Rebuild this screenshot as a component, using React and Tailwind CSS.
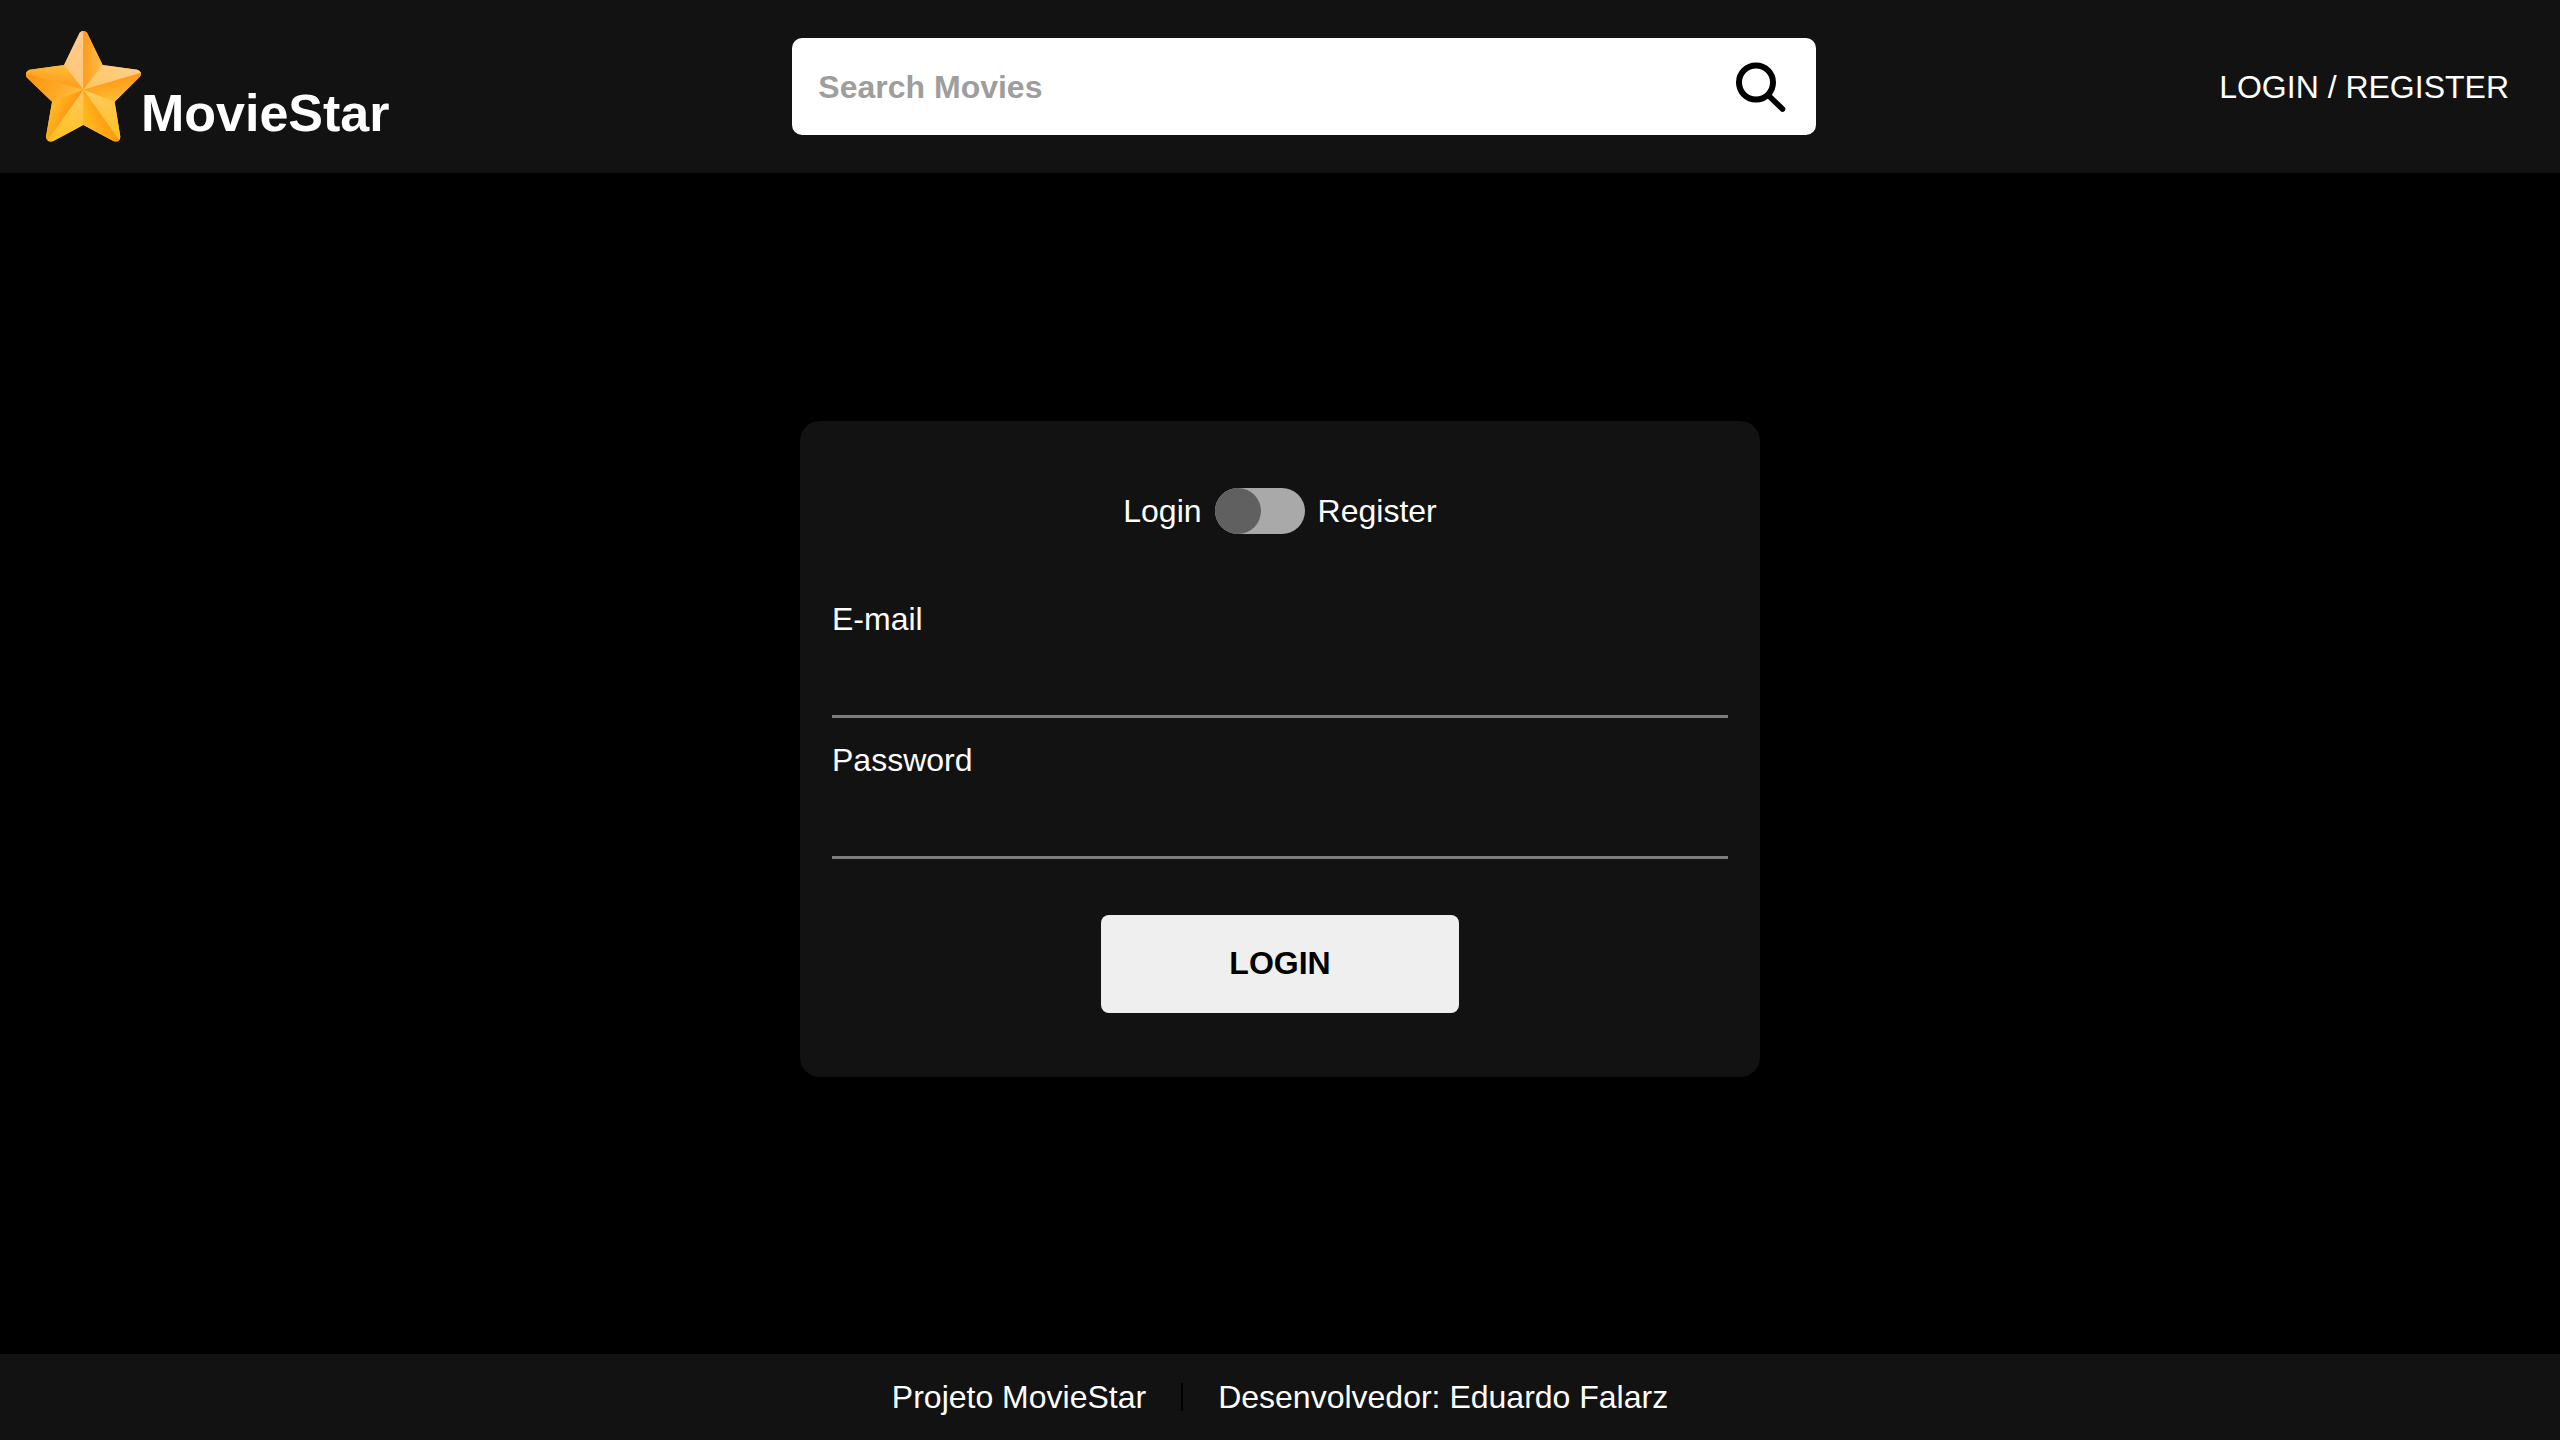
import { useState } from "react";

function StarLogo() {
  return (
    <svg viewBox="78 87 345 345" className="size-[115px] shrink-0" aria-hidden="true">
      <defs>
        <linearGradient id="topLeft" x1="0.6" y1="0" x2="0.4" y2="1">
          <stop offset="0" stopColor="#ffcb90" />
          <stop offset="1" stopColor="#ffc673" />
        </linearGradient>
        <linearGradient id="topRight" x1="0" y1="0.5" x2="1" y2="0.6">
          <stop offset="0" stopColor="#ff9b1d" />
          <stop offset="1" stopColor="#ffc04c" />
        </linearGradient>
        <linearGradient id="rightTop" x1="1" y1="0" x2="0" y2="1">
          <stop offset="0" stopColor="#ffcf92" />
          <stop offset="1" stopColor="#ffc65c" />
        </linearGradient>
        <linearGradient id="rightBottom" x1="0.45" y1="0.2" x2="0.65" y2="0.85">
          <stop offset="0" stopColor="#ff9718" />
          <stop offset="1" stopColor="#ffbb2c" />
        </linearGradient>
        <linearGradient id="lowRight" x1="0.4" y1="0" x2="0.5" y2="1">
          <stop offset="0" stopColor="#ffcb5c" />
          <stop offset="1" stopColor="#ffc022" />
        </linearGradient>
        <linearGradient id="bottomRight" x1="0.6" y1="0.4" x2="0.2" y2="0.65">
          <stop offset="0" stopColor="#ff990e" />
          <stop offset="1" stopColor="#ffb51c" />
        </linearGradient>
        <linearGradient id="bottomLeft" x1="0.6" y1="0.1" x2="0.5" y2="1">
          <stop offset="0" stopColor="#ffc752" />
          <stop offset="1" stopColor="#ffc221" />
        </linearGradient>
        <linearGradient id="lowLeft" x1="0.6" y1="0.6" x2="0.2" y2="0.35">
          <stop offset="0" stopColor="#ff960f" />
          <stop offset="1" stopColor="#ffb828" />
        </linearGradient>
        <linearGradient id="leftBottom" x1="0" y1="0.2" x2="1" y2="0.4">
          <stop offset="0" stopColor="#ff9314" />
          <stop offset="0.4" stopColor="#ffa01c" />
          <stop offset="1" stopColor="#ffbc3c" />
        </linearGradient>
        <linearGradient id="leftTop" x1="0.45" y1="0.65" x2="0.65" y2="0.1">
          <stop offset="0" stopColor="#ffa220" />
          <stop offset="1" stopColor="#ffb939" />
        </linearGradient>
        <clipPath id="starShape">
          <path d="M239 98Q243 93 250 93Q257 93 261 98L308 195L412 209Q420 211 423 219Q424 226 418 232L344 305L361 410Q361 417 356 422Q349 427 340 423L250 375L160 423Q151 427 144 422Q138 417 138 410L156 305L82 234Q76 228 78 219Q81 211 89 209L192 195Z" />
        </clipPath>
      </defs>
      <g clipPath="url(#starShape)">
        <path fill="#ffac28" d="M70 80H430V440H70Z" />
        <path fill="url(#topLeft)" d="M250 269V85H236L192 195Z" />
        <path fill="url(#topRight)" d="M250 269V85H264L308 195Z" />
        <path fill="url(#rightTop)" d="M250 269L308 195L430 200V217Z" />
        <path fill="url(#rightBottom)" d="M250 269L430 217V235L344 305Z" />
        <path fill="url(#lowRight)" d="M250 269L344 305L370 430L362 427Z" />
        <path fill="url(#bottomRight)" d="M250 269L362 427L345 435L250 375Z" />
        <path fill="url(#bottomLeft)" d="M250 269V375L155 435L138 427Z" />
        <path fill="url(#lowLeft)" d="M250 269L138 427L130 420L156 305Z" />
        <path fill="url(#leftBottom)" d="M250 269L156 305L70 240V219Z" />
        <path fill="url(#leftTop)" d="M250 269L70 219V205L192 195Z" />
      </g>
    </svg>
  );
}

function SearchIcon() {
  return (
    <svg viewBox="0 0 50 50" className="size-[50px]" fill="none" stroke="#000" aria-hidden="true">
      <circle cx="20" cy="20.5" r="17" strokeWidth="6" />
      <path d="M33 34L46.5 47" strokeWidth="5.6" strokeLinecap="round" />
    </svg>
  );
}

function Header() {
  return (
    <header className="flex h-[173px] items-center justify-between bg-[#121212] pr-[51px] pl-[26px]">
      <a href="#" className="flex items-end">
        <StarLogo />
        <span className="text-[52px] leading-[62px] font-bold">MovieStar</span>
      </a>
      <form
        className="flex h-[97px] w-[40vw] items-center rounded-[10px] bg-white pr-[30px] pl-[26px]"
        onSubmit={(e) => e.preventDefault()}
      >
        <input
          type="search"
          aria-label="Search Movies"
          placeholder="Search Movies"
          className="h-full min-w-0 flex-1 bg-transparent pt-0.5 font-bold text-black outline-none placeholder:text-[#9e9e9e]"
        />
        <button type="submit" aria-label="Search">
          <SearchIcon />
        </button>
      </form>
      <a href="#">LOGIN / REGISTER</a>
    </header>
  );
}

function Field({ id, label, type }) {
  return (
    <div className="flex flex-col">
      <label htmlFor={id}>{label}</label>
      <input
        id={id}
        type={type}
        className="h-[81px] w-full border-b-[3px] border-[#7d7d7d] bg-transparent outline-none"
      />
    </div>
  );
}

function AuthCard() {
  const [register, setRegister] = useState(false);
  return (
    <form
      className="flex w-3/8 flex-col rounded-[20px] bg-[#121212] px-8 pt-[67px] pb-16"
      onSubmit={(e) => e.preventDefault()}
    >
      <div className="flex items-center justify-center gap-[13px]">
        <label htmlFor="mode">Login</label>
        <input
          id="mode"
          type="checkbox"
          role="switch"
          checked={register}
          onChange={(e) => setRegister(e.target.checked)}
          className="flex h-[46px] w-[90px] appearance-none rounded-full bg-[#a9a9a9] before:size-[46px] before:rounded-full before:bg-[#606060] checked:justify-end"
        />
        <label htmlFor="mode">Register</label>
      </div>
      <div className="mt-[67px] flex flex-col gap-6">
        <Field id="email" label="E-mail" type="email" />
        <Field id="password" label="Password" type="password" />
      </div>
      <button
        type="submit"
        className="mt-14 h-[98px] w-2/5 self-center rounded-lg bg-[#efefef] pb-0.5 font-bold text-black"
      >
        LOGIN
      </button>
    </form>
  );
}

function Footer() {
  return (
    <footer className="flex h-[86px] items-center justify-center gap-[35px] bg-[#121212]">
      <span>Projeto MovieStar</span>
      <span className="h-7 w-0.5 bg-black" />
      <span>Desenvolvedor: Eduardo Falarz</span>
    </footer>
  );
}

export default function App() {
  return (
    <div className="flex min-h-screen flex-col bg-black font-['Liberation_Sans',Arial,sans-serif] text-[32px] leading-9 text-white">
      <Header />
      <main className="flex flex-1 items-center justify-center pb-[30px]">
        <AuthCard />
      </main>
      <Footer />
    </div>
  );
}
